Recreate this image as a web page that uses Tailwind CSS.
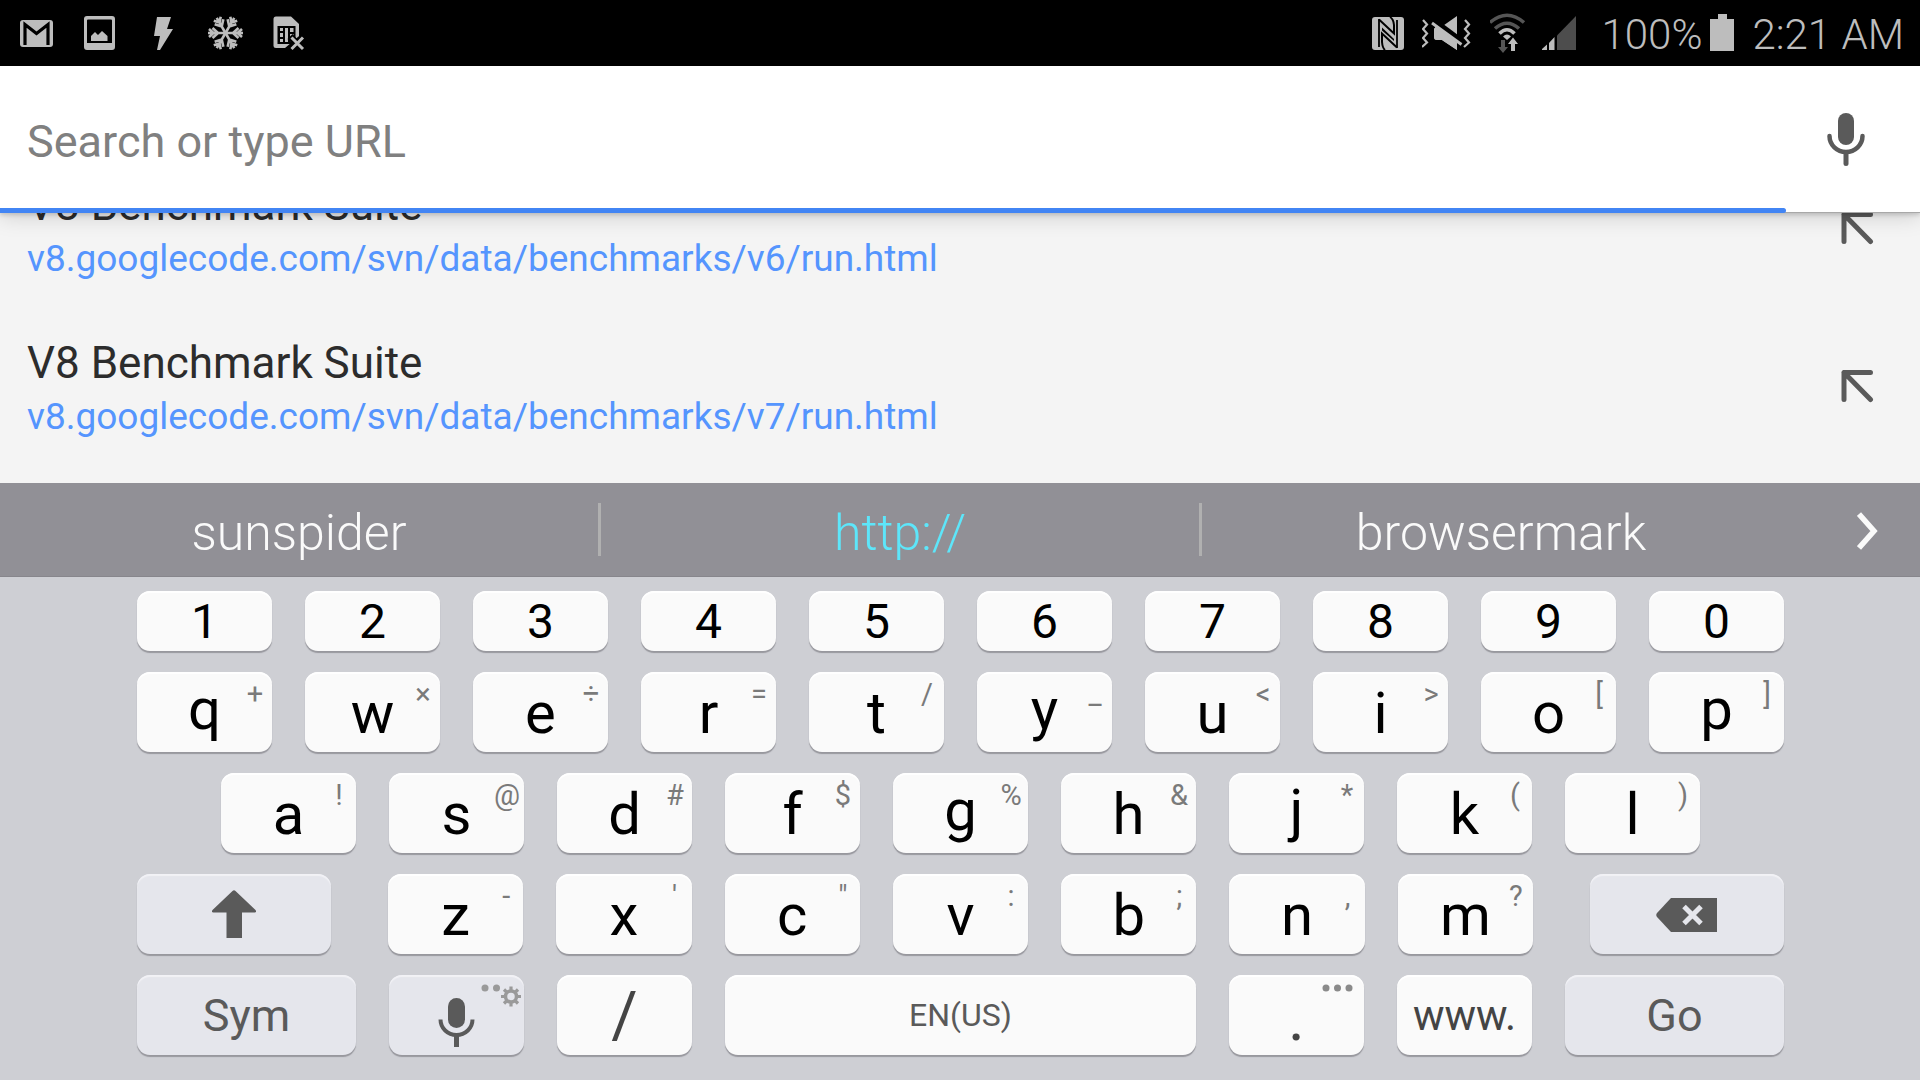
<!DOCTYPE html>
<html lang="en">
<head>
  <meta charset="UTF-8" />
  <meta name="viewport" content="width=device-width, initial-scale=1.0" />
  <title>Search or type URL</title>
  <script src="https://cdn.jsdelivr.net/npm/@tailwindcss/browser@4"></script>
</head>

<body class="flex flex-col h-screen overflow-hidden bg-[#f4f4f4] font-[Roboto,sans-serif]">

  <!-- Status bar -->
  <header class="flex items-center justify-between h-[66px] shrink-0 bg-black text-[#bdbdbd] pl-[18px] pr-[16px]">
    <div class="flex items-center gap-[27px]">
      <!-- Mail -->
      <svg class="size-9" viewBox="0 0 36 36" fill="none">
        <rect x="2" y="5" width="33" height="27" rx="3" fill="#bdbdbd" />
        <path d="M7 30V9.500L18.500 18.500L30 9.500V30" stroke="#000" stroke-width="3.200" />
      </svg>
      <!-- Screenshot -->
      <svg class="size-9" viewBox="0 0 36 36" fill="none">
        <path fill="#bdbdbd" fill-rule="evenodd" d="M6 1H31Q34 1 34 4V32Q34 35 31 35H6Q3 35 3 32V4Q3 1 6 1ZM7 4.500Q6 4.500 6 5.500V28H31V5.500Q31 4.500 30 4.500Z" />
        <path fill="#bdbdbd" d="M10 26V21L14 17L17 20L21 16L26.500 21V26Z" />
      </svg>
      <!-- Flash -->
      <svg class="size-9" viewBox="0 0 36 36">
        <path fill="#bdbdbd" d="M13 2H27L23 14H29L16 35H13L16 21H10Z" />
      </svg>
      <!-- Snowflake -->
      <svg class="size-9" viewBox="0 0 36 36" fill="none" stroke="#bdbdbd" stroke-width="2.600">
        <g id="arm"><path d="M18.500 18H36M26 18L31.500 13M26 18L31.500 23M30.500 18L35 14M30.500 18L35 22" /></g>
        <use href="#arm" transform="rotate(60 18.500 18)" />
        <use href="#arm" transform="rotate(120 18.500 18)" />
        <use href="#arm" transform="rotate(180 18.500 18)" />
        <use href="#arm" transform="rotate(240 18.500 18)" />
        <use href="#arm" transform="rotate(300 18.500 18)" />
      </svg>
      <!-- No SIM -->
      <svg class="size-9" viewBox="0 0 36 36" fill="none">
        <path fill="#bdbdbd" d="M6 1.500H21L29 9V33H6Q3.500 33 3.500 30.500V4Q3.500 1.500 6 1.500Z" />
        <rect x="7.500" y="11" width="18" height="18" fill="#000" />
        <path fill="#bdbdbd" d="M10 13h3v3h-3zM10 18h3v4h-3zM10 24h3v3h-3zM15 13h3v14h-3zM20 13h3.500v4H20zM20 19h3.500v8H20z" />
        <path d="M20 21.500L34 36M34 21.500L17 36" stroke="#000" stroke-width="7" />
        <path d="M21.500 22.500L33 34M33 22.500L21.500 34" stroke="#bdbdbd" stroke-width="3" />
      </svg>
    </div>

    <div class="flex items-center">
      <div class="flex items-center gap-4">
        <!-- NFC -->
        <svg class="size-9" viewBox="0 0 36 36">
          <rect x="2" y="2" width="32" height="33" rx="3" fill="#bdbdbd" />
          <path d="M9 4V32M27 33V5" fill="none" stroke="#000" stroke-width="1.800" />
          <path d="M9 4.500L24 18.500V10Q23.500 4 20 2M27 32.500L12 18.500V27Q12.500 33 15 35" fill="none" stroke="#000" stroke-width="2" />
          <path d="M12 12.500L24 24V26L12 15.500Z" fill="#000" />
        </svg>
        <!-- Vibrate, muted -->
        <svg class="w-[52px] h-9" viewBox="0 0 52 36" fill="none">
          <path d="M1 5L5 9.500L1 14L5 18.500L1 23L5 27.500L0 32M43 5L47 9.500L43 14L47 18.500L43 23L47 27.500L42 32" stroke="#bdbdbd" stroke-width="2.200" />
          <path d="M14 11.500H20L35 1V35L20 25H15Q12 25 12 22V14Z" fill="#bdbdbd" />
          <path d="M12 6.500L41 28" stroke="#000" stroke-width="7" />
          <path d="M10 8L39.500 29.500" stroke="#bdbdbd" stroke-width="2.800" />
          <path d="M14 11.500L35 27.500V35L20 25H15Q12 25 12 22V14Z" fill="#bdbdbd" />
        </svg>
        <!-- Wi-Fi -->
        <svg class="w-9 h-10" viewBox="0 0 36 40" fill="none" stroke-width="3.600">
          <path d="M0 9.500Q17 -5 34 9.500M5 15.500Q17 5 29 15.500" stroke="#555" />
          <path d="M9.500 20.500Q17 13 24.500 20.500" stroke="#bdbdbd" />
          <path d="M13 23.500Q17 19.500 21 23.500L17 27Z" fill="#bdbdbd" />
          <path d="M11 27h4v7h3l-5 6l-5 -6h3z" fill="#555" />
          <path d="M21 38h4v-7h3l-5 -6.500l-5 6.500h3z" fill="#bdbdbd" />
        </svg>
        <!-- Signal -->
        <svg class="size-9" viewBox="0 0 36 36">
          <path d="M15 35V20.500L34 1V35Z" fill="#4d4d4d" />
          <path d="M-1 35L5 29.500V35ZM7 35V28L12.500 22V35Z" fill="#bdbdbd" />
        </svg>
      </div>
      <span class="ml-6 text-[42px] leading-none font-[350] pt-1">100%</span>
      <svg class="w-6 h-[38px] ml-2" viewBox="0 0 24 38">
        <path d="M8 0H17V5H24V37H0V5H8Z" fill="#bdbdbd" />
      </svg>
      <time class="ml-[18px] text-[42px] leading-none font-[350] pt-1">2:21 AM</time>
    </div>
  </header>

  <!-- Omnibox -->
  <div class="relative z-10 flex items-center h-[147px] shrink-0 bg-white pl-[27px] pr-[54px] border-b border-[#a8a8a8] shadow-[0_2px_4px_rgba(0,0,0,0.15),0_4px_20px_rgba(0,0,0,0.15)]">
    <input
      type="text"
      aria-label="Search or type URL"
      placeholder="Search or type URL"
      class="flex-1 min-w-0 pt-[6px] text-[45px] text-[#2c2c2c] placeholder:text-[#808080] outline-none"
    />
    <button aria-label="Voice search">
      <svg class="w-10 h-[54px]" viewBox="0 0 40 54" fill="none" stroke="#5a5a5a" stroke-linecap="round">
        <rect x="12" y="1" width="16" height="32" rx="8" fill="#5a5a5a" stroke="none" />
        <path d="M3.500 24A16.500 16 0 0 0 36.500 24" stroke-width="4.500" />
        <path d="M20 41V51.500" stroke-width="5" />
      </svg>
    </button>
    <!-- Page load progress -->
    <div class="absolute left-0 -bottom-px w-[93%] h-[5px] bg-[#4285f4] rounded-r-full"></div>
  </div>

  <!-- Suggestions, scrolled under the omnibox -->
  <ul class="flex flex-col justify-end flex-1 min-h-0 overflow-hidden pb-[18px]">
    <li class="flex items-center justify-between h-[158px] shrink-0 pl-[27px] pr-[46px]">
      <a href="#" class="block pt-[8px]">
        <span class="block text-[44px] leading-[54px] text-[#2c2c2c]">V8 Benchmark Suite</span>
        <span class="block text-[37px] leading-[54px] text-[#5595fe]">v8.googlecode.com/svn/data/benchmarks/v6/run.html</span>
      </a>
      <button aria-label="Edit suggestion">
        <svg class="w-[33px] h-[33px]" viewBox="0 0 33 33" fill="none" stroke="#5a5a5a" stroke-width="5" stroke-linecap="round" stroke-linejoin="round">
          <path d="M29.500 2.500H3V29.500M3 2.500L29.500 29.500" />
        </svg>
      </button>
    </li>
    <li class="flex items-center justify-between h-[158px] shrink-0 pl-[27px] pr-[46px]">
      <a href="#" class="block pt-[8px]">
        <span class="block text-[44px] leading-[54px] text-[#2c2c2c]">V8 Benchmark Suite</span>
        <span class="block text-[37px] leading-[54px] text-[#5595fe]">v8.googlecode.com/svn/data/benchmarks/v7/run.html</span>
      </a>
      <button aria-label="Edit suggestion">
        <svg class="w-[33px] h-[33px]" viewBox="0 0 33 33" fill="none" stroke="#5a5a5a" stroke-width="5" stroke-linecap="round" stroke-linejoin="round">
          <path d="M29.500 2.500H3V29.500M3 2.500L29.500 29.500" />
        </svg>
      </button>
    </li>
  </ul>

  <!-- Word predictions -->
  <div class="flex items-center h-[94px] shrink-0 bg-[#919096] text-[#fafafa] text-[50px] leading-none font-[350] border-b border-[#87868c]">
    <button class="flex-1 h-full pt-[6px]">sunspider</button>
    <div class="w-[3px] h-[53px] bg-[#b0b0b0]"></div>
    <button class="flex-1 h-full pt-[6px] text-[#5de6fa]">http://</button>
    <div class="w-[3px] h-[53px] bg-[#b0b0b0]"></div>
    <button class="flex-1 h-full pt-[6px]">browsermark</button>
    <button aria-label="More predictions" class="flex justify-center w-[120px] pl-[14px] pt-[2px]">
      <svg class="w-[21px] h-[38px]" viewBox="0 0 21 38" fill="none" stroke="#fafafa" stroke-width="5.500">
        <path d="M2 2L17 19L2 36" />
      </svg>
    </button>
  </div>

  <!-- Keyboard -->
  <div class="flex flex-col gap-[21px] shrink-0 bg-[#cecfd4] pl-[137px] pr-[136px] pt-[14px] pb-[25px]">
    <div id="digits" class="flex gap-[33px] h-[60px]"></div>
    <div id="top" class="flex gap-[33px] h-[80px]"></div>
    <div id="home" class="flex gap-[33px] h-[80px] px-[84px]"></div>
    <div class="flex gap-[57px] h-[80px]">
      <button aria-label="Shift" class="flex items-center justify-center w-[194px] rounded-[13px] bg-[#e5e6ec] shadow-[0_2px_1px_#98989e,inset_0_2px_1px_#f2f2f6]">
        <svg class="w-[46px] h-[48px]" viewBox="0 0 46 48">
          <path d="M21.500 1Q23 -0.500 24.500 1L44.500 20Q46 22.500 43.500 22.500H31V48H15.500V22.500H2.500Q0 22.500 1.500 20Z" fill="#5a5a5a" />
        </svg>
      </button>
      <div id="lower" class="flex flex-1 gap-[33px]"></div>
      <button aria-label="Backspace" class="flex items-center justify-center w-[194px] pt-[2px] rounded-[13px] bg-[#e5e6ec] shadow-[0_2px_1px_#98989e,inset_0_2px_1px_#f2f2f6]">
        <svg class="w-[62px] h-[34px]" viewBox="0 0 62 34">
          <path d="M15 0H61V34H15L1 19Q-0.500 17 1 15Z" fill="#5a5a5a" />
          <path d="M28 8.500L45 25.500M45 8.500L28 25.500" stroke="#e5e6ec" stroke-width="5" />
        </svg>
      </button>
    </div>
    <div class="flex gap-[33px] h-[80px] text-[#5a5a5a]">
      <button class="flex-[219] min-w-0 rounded-[13px] bg-[#e5e6ec] text-[45px] leading-none shadow-[0_2px_1px_#98989e,inset_0_2px_1px_#f2f2f6]">Sym</button>
      <button aria-label="Voice input" class="relative flex items-center justify-center flex-[135] min-w-0 pt-[15px] rounded-[13px] bg-[#e5e6ec] shadow-[0_2px_1px_#98989e,inset_0_2px_1px_#f2f2f6]">
        <svg class="w-[38px] h-[50px]" viewBox="0 0 38 50" fill="none" stroke="#5a5a5a">
          <rect x="10" y="0" width="17" height="30" rx="8.500" fill="#5a5a5a" stroke="none" />
          <path d="M2.500 21.500A16 15.500 0 0 0 34.500 21.500" stroke-width="4" />
          <path d="M18.500 38V49" stroke-width="5" />
        </svg>
        <svg class="absolute top-[8px] right-[2px] w-[42px] h-[24px]" viewBox="0 0 42 24" fill="#9a9a9a">
          <circle cx="5" cy="5" r="3.500" />
          <circle cx="16.500" cy="5" r="3.500" />
          <circle cx="31" cy="13.500" r="5.500" fill="none" stroke="#9a9a9a" stroke-width="3.500" />
          <path d="M31 3.500V8M31 19V23.500M21 13.500H25.500M36.500 13.500H41M24 6.500L27 9.500M35 17.500L38 20.500M38 6.500L35 9.500M27 17.500L24 20.500" stroke="#9a9a9a" stroke-width="3.200" />
        </svg>
      </button>
      <button class="flex-[135] min-w-0 pt-[2px] rounded-[13px] bg-[#fafafa] text-[#444] text-[64px] leading-none shadow-[0_2px_1px_#98989e,inset_0_2px_1px_#fff]">/</button>
      <button class="flex-[471] min-w-0 rounded-[13px] bg-[#fafafa] text-[32px] leading-none shadow-[0_2px_1px_#98989e,inset_0_2px_1px_#fff]">EN(US)</button>
      <button class="relative flex-[135] min-w-0 pt-[8px] rounded-[13px] bg-[#fafafa] text-[#444] text-[64px] leading-none shadow-[0_2px_1px_#98989e,inset_0_2px_1px_#fff]">
        .
        <svg class="absolute top-[8px] right-[8px] w-[34px] h-[10px]" viewBox="0 0 34 10" fill="#8a8a8a">
          <circle cx="4" cy="5" r="3.500" />
          <circle cx="15.500" cy="5" r="3.500" />
          <circle cx="27" cy="5" r="3.500" />
        </svg>
      </button>
      <button class="flex-[135] min-w-0 pt-[2px] rounded-[13px] bg-[#fafafa] text-[#444] text-[42px] leading-none shadow-[0_2px_1px_#98989e,inset_0_2px_1px_#fff]">www.</button>
      <button class="flex-[219] min-w-0 rounded-[13px] bg-[#e5e6ec] text-[45px] leading-none shadow-[0_2px_1px_#98989e,inset_0_2px_1px_#f2f2f6]">Go</button>
    </div>
  </div>

  <script>
    // Each key is [label, long-press symbol]
    const rows = {
      digits: [["1"], ["2"], ["3"], ["4"], ["5"], ["6"], ["7"], ["8"], ["9"], ["0"]],
      top: [["q", "+"], ["w", "×"], ["e", "÷"], ["r", "="], ["t", "/"], ["y", "_"], ["u", "&lt;"], ["i", "&gt;"], ["o", "["], ["p", "]"]],
      home: [["a", "!"], ["s", "@"], ["d", "#"], ["f", "$"], ["g", "%"], ["h", "&amp;"], ["j", "*"], ["k", "("], ["l", ")"]],
      lower: [["z", "-"], ["x", "'"], ["c", '"'], ["v", ":"], ["b", ";"], ["n", ","], ["m", "?"]],
    };

    for (const id in rows) {
      document.getElementById(id).innerHTML = rows[id].map(([label, symbol]) => {
        // letters with a tail sit a little higher
        let size = "text-[58px] pt-[2px]";
        if ("qypgj".includes(label)) size = "text-[58px] pb-[6px]";
        if (!symbol) size = "text-[48px] pt-[2px]";

        return `
          <button class="relative flex-1 min-w-0 rounded-[13px] bg-[#fafafa] text-black leading-none shadow-[0_2px_1px_#98989e,inset_0_2px_1px_#fff] ${size}">
            ${label}
            ${symbol ? `<span class="absolute top-[8px] right-0 w-[34px] text-center text-[29px] leading-none text-[#7a7a7a]">${symbol}</span>` : ""}
          </button>`;
      }).join("");
    }
  </script>
</body>
</html>
